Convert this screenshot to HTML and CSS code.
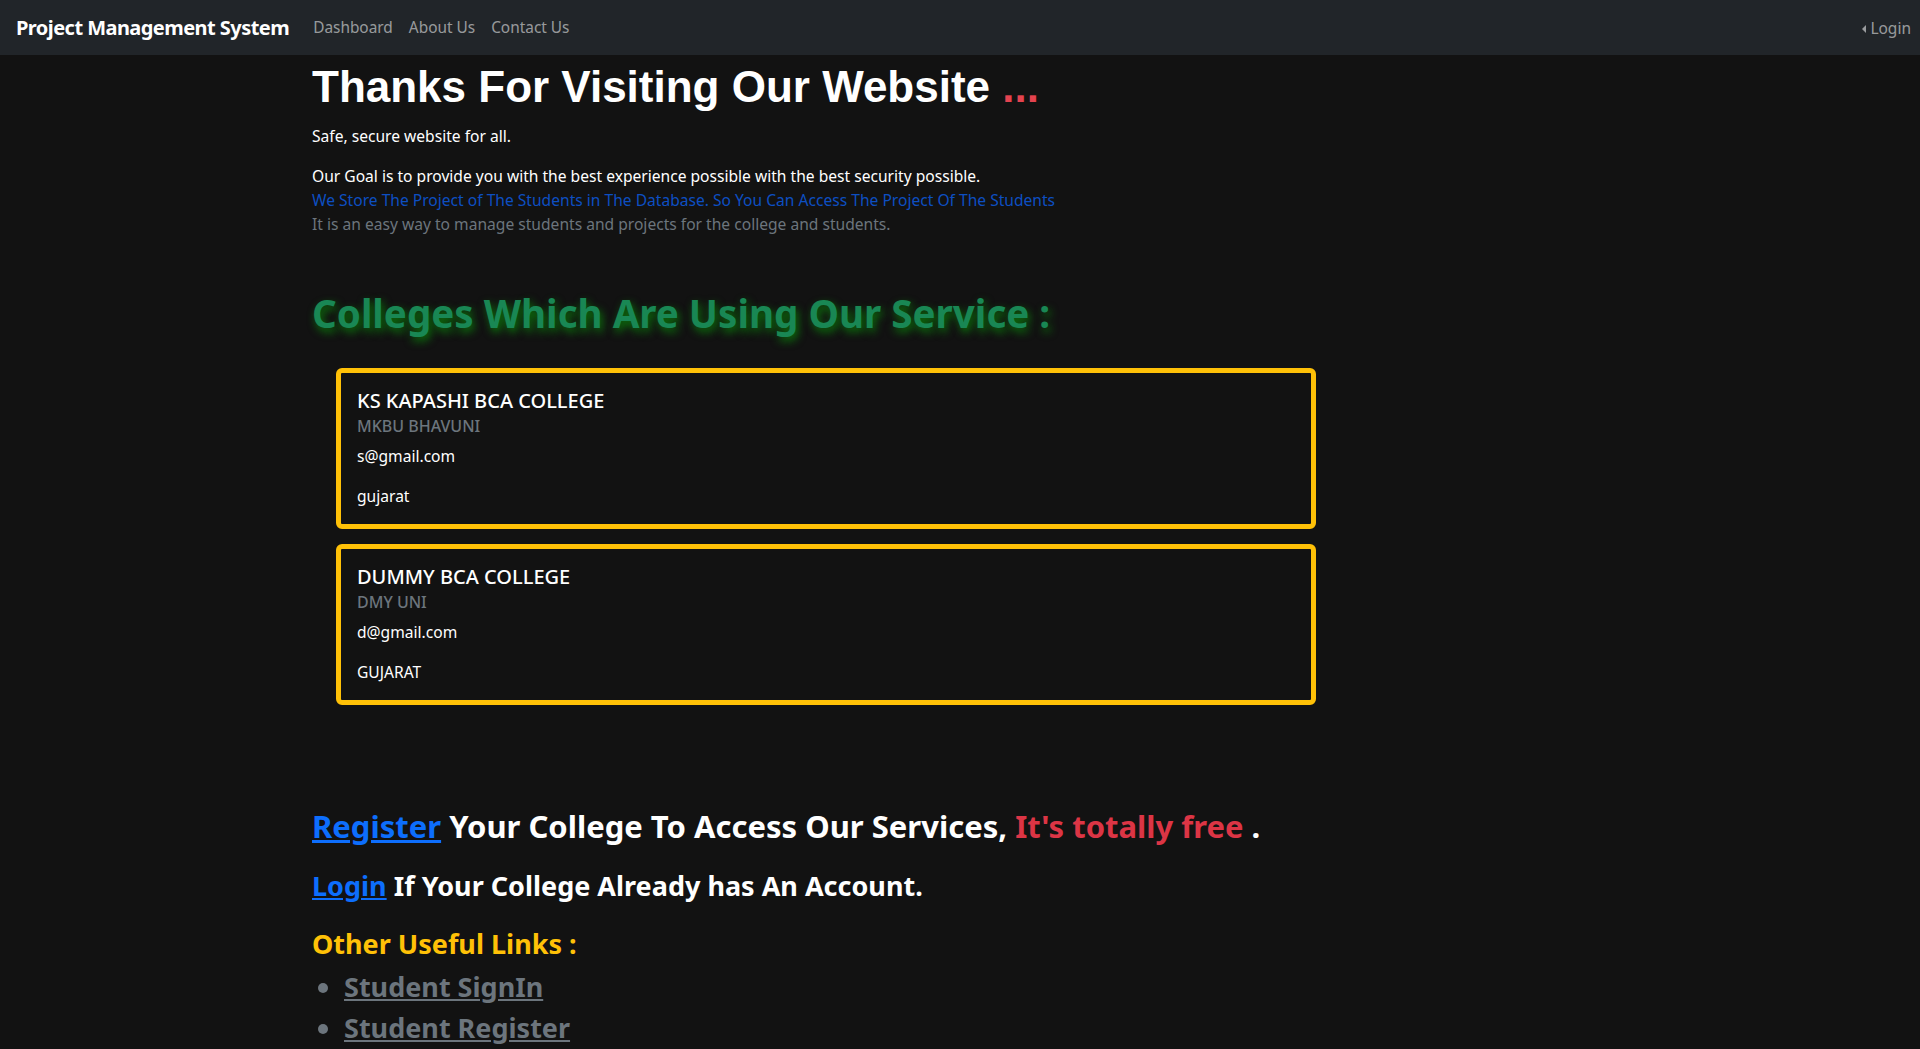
FILE: index.html
```html
<!DOCTYPE html>
<html lang="en">
<head>
<meta charset="utf-8">
<title>Project Management System</title>
<link rel="stylesheet" href="styles.css">
</head>
<body>
<nav class="navbar">
  <div class="nav-left">
    <a class="brand" href="#">Project Management System</a>
    <ul class="nav-links">
      <li><a href="#">Dashboard</a></li>
      <li><a href="#">About Us</a></li>
      <li><a href="#">Contact Us</a></li>
    </ul>
  </div>
  <a class="login-toggle" href="#"><span class="caret"></span>Login</a>
</nav>

<main class="container">
  <h1 class="hero-title">Thanks For Visiting Our Website <span class="dots">...</span></h1>
  <p class="tagline">Safe, secure website for all.</p>
  <p class="goal">Our Goal is to provide you with the best experience possible with the best security possible.<br>
    <span class="goal-blue">We Store The Project of The Students in The Database. So You Can Access The Project Of The Students</span><br>
    <span class="goal-muted">It is an easy way to manage students and projects for the college and students.</span>
  </p>

  <h1 class="colleges-title">Colleges Which Are Using Our Service :</h1>

  <div class="college-list">
    <div class="college-card">
      <h5 class="card-title">KS KAPASHI BCA COLLEGE</h5>
      <h6 class="card-subtitle">MKBU BHAVUNI</h6>
      <p class="card-text">s@gmail.com</p>
      <p class="card-text">gujarat</p>
    </div>
    <div class="college-card">
      <h5 class="card-title">DUMMY BCA COLLEGE</h5>
      <h6 class="card-subtitle">DMY UNI</h6>
      <p class="card-text">d@gmail.com</p>
      <p class="card-text">GUJARAT</p>
    </div>
  </div>

  <h2 class="cta cta-register"><a href="#">Register</a> Your College To Access Our Services, <span class="free">It's totally free</span> .</h2>
  <h3 class="cta cta-login"><a href="#">Login</a> If Your College Already has An Account.</h3>

  <h3 class="links-title">Other Useful Links :</h3>
  <ul class="useful-links">
    <li><a href="#">Student SignIn</a></li>
    <li><a href="#">Student Register</a></li>
  </ul>
</main>
</body>
</html>
```

FILE: styles.css
```css
* { box-sizing: border-box; }

html, body {
  margin: 0;
  padding: 0;
}

body {
  background: #121212;
  color: #ffffff;
  font-family: "Noto Sans", "Open Sans", sans-serif;
  font-size: 16px;
  line-height: 24px;
}

a { color: inherit; }

/* ---------- navbar ---------- */
.navbar {
  display: flex;
  align-items: center;
  justify-content: space-between;
  height: 55px;
  padding: 1px 9px 0 16px;
  background: #212529;
}

.nav-left {
  display: flex;
  align-items: center;
}

.brand {
  font-size: 20px;
  font-weight: 700;
  color: #ffffff;
  text-decoration: none;
  letter-spacing: -0.55px;
  margin-right: 16px;
}

.nav-links {
  display: flex;
  list-style: none;
  margin: 0;
  padding: 0;
}

.nav-links a {
  display: block;
  padding: 0 8px;
  color: rgba(255, 255, 255, 0.55);
  text-decoration: none;
  font-size: 15.4px;
}

.login-toggle {
  display: flex;
  align-items: center;
  color: rgba(255, 255, 255, 0.55);
  text-decoration: none;
  font-size: 15.5px;
}

.caret {
  width: 0;
  height: 0;
  border-top: 4px solid transparent;
  border-bottom: 4px solid transparent;
  border-right: 4px solid rgba(255, 255, 255, 0.55);
  margin-right: 4px;
  margin-top: 1px;
}

/* ---------- main ---------- */
.container {
  width: 1296px;
  margin: 0 auto;
}

.hero-title {
  font-family: "Liberation Sans", Arial, sans-serif;
  font-size: 44px;
  font-weight: 700;
  line-height: 53px;
  margin: 5px 0 11px;
}

.dots { color: #e4434f; }

.tagline {
  margin: 0 0 16px;
  font-size: 15.6px;
}

.goal {
  margin: 0;
  font-size: 15.6px;
}

.goal-blue { color: #0d4fc2; }
.goal-muted { color: #6c757d; }

.colleges-title {
  margin: 53px 0 31px;
  font-size: 38.6px;
  line-height: 48px;
  font-weight: 700;
  color: #198754;
  text-shadow: 2px 4px 8px #0b7a0b;
}

/* ---------- cards ---------- */
.college-list {
  display: flex;
  flex-direction: column;
  gap: 15px;
  margin-left: 24px;
  width: 980px;
}

.college-card {
  border: 5px solid #ffc107;
  border-radius: 6px;
  padding: 16px;
}

.card-title {
  margin: 0 0 8px;
  font-size: 20px;
  font-weight: 500;
  line-height: 24px;
}

.card-subtitle {
  margin: -4px 0 8px;
  font-size: 16px;
  font-weight: 500;
  line-height: 19.2px;
  color: #6c757d;
}

.card-text {
  margin: 0 0 16px;
  font-size: 15.6px;
}

.card-text:last-child { margin-bottom: 0; }

/* ---------- call to action ---------- */
.cta {
  font-weight: 700;
}

.cta a { color: #0d6efd; text-decoration: underline; }

.cta-register {
  margin: 102px 0 24px;
  font-size: 31px;
  line-height: 38px;
}

.cta-login {
  margin: 0 0 24px;
  font-size: 27px;
  line-height: 34px;
}

.free { color: #dc3545; }

.links-title {
  margin: 0;
  font-size: 27px;
  line-height: 34px;
  font-weight: 700;
  color: #ffc107;
}

.useful-links {
  margin: 5px 0 0;
  padding-left: 32px;
  color: #6c757d;
}

.useful-links li {
  font-size: 27px;
  line-height: 41px;
  font-weight: 700;
}

.useful-links a { color: #6c757d; }
```
